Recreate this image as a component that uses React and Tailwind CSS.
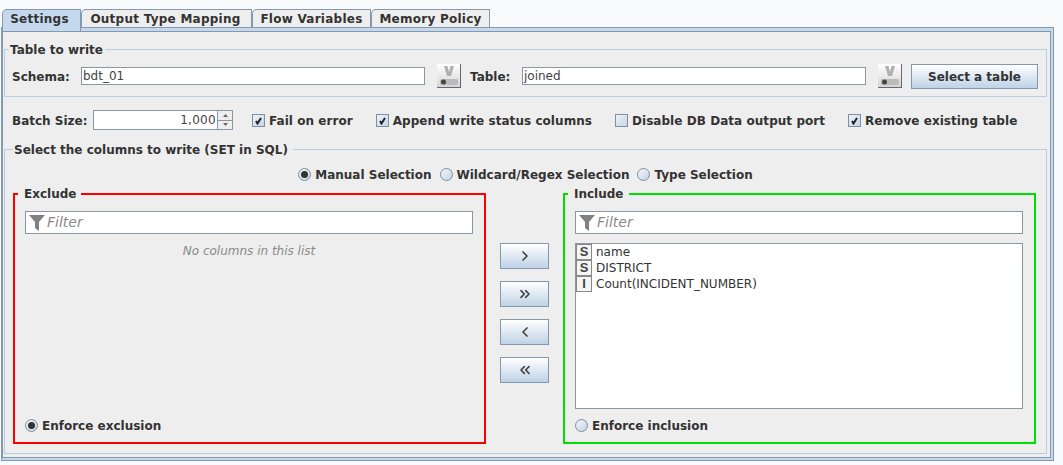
import { ChevronRight, ChevronLeft, ChevronsRight, ChevronsLeft } from 'lucide-react';

const FONT = "font-['DejaVu_Sans',sans-serif]";

const tabs = [
  { label: 'Settings', width: 'w-[79px]', active: true, shift: 'pr-[4px]' },
  { label: 'Output Type Mapping', width: 'w-[171px]', shift: 'pr-[2px]' },
  { label: 'Flow Variables', width: 'w-[119px]' },
  { label: 'Memory Policy', width: 'w-[119px]' },
];

const Tab = ({ label, width, active, shift }) => (
  <div
    className={`${width} ${shift || ''} border border-b-0 border-[#8499b0] rounded-tl-[5px] flex justify-center text-[12px] tracking-[0.25px] leading-none font-bold text-[#333] whitespace-nowrap ${
      active ? 'h-[22px] bg-[#c5d9ee] relative z-10 items-start pt-[3px]' : 'h-[18px] bg-[#eeeeee] items-center'
    }`}
  >
    {label}
  </div>
);

const VarButton = () => (
  <button className="w-[24px] h-[24px] shrink-0 border-r border-b border-[#667] bg-gradient-to-b from-white to-[#d5d5d5] flex items-center justify-center">
    <svg width="22" height="22" viewBox="0 0 22 22">
      <path d="M6 1h3.5l1.5 6 1.5-6H16l-3 10h-4z" fill="#b0b0b0" />
      <rect x="2" y="14" width="18" height="6" rx="1.5" fill="#bbb" />
      <circle cx="5.5" cy="17" r="2.5" fill="#444" />
    </svg>
  </button>
);

const Check = ({ checked, label }) => (
  <div className="flex items-center gap-[4px] whitespace-nowrap">
    <span className="w-[13px] h-[13px] border border-[#7f8fa3] bg-gradient-to-br from-[#eef3f9] to-[#c6d5e6] flex items-center justify-center">
      {checked && (
        <svg width="9" height="9" viewBox="0 0 9 9">
          <path d="M2 5l1.5 2.5L7 2" fill="none" stroke="#222" strokeWidth="2" />
        </svg>
      )}
    </span>
    <span className="text-[12px] tracking-[0.05px] mt-[2px] font-bold text-[#333]">{label}</span>
  </div>
);

const Radio = ({ checked, label }) => (
  <div className="flex items-center gap-[4px] whitespace-nowrap">
    <span className="w-[13px] h-[13px] rounded-full border border-[#7f8fa3] bg-gradient-to-br from-[#f2f5fa] to-[#c6d5e6] flex items-center justify-center">
      {checked && <span className="w-[7px] h-[7px] rounded-full bg-[#333]" />}
    </span>
    <span className="text-[12px] mt-[2px] font-bold text-[#333]">{label}</span>
  </div>
);

const FilterBox = () => (
  <div className="h-[23px] shrink-0 border border-[#8a96a3] bg-white flex items-center pl-[3px] gap-[2px]">
    <svg width="16" height="18" viewBox="0 0 16 18">
      <path d="M0 1h16L10 8v9l-4-3V8z" fill="#808080" />
    </svg>
    <span className="text-[14px] italic text-[#8a8a8a]">Filter</span>
  </div>
);

const ArrowButton = ({ icon: Icon }) => (
  <button className="w-[49px] h-[26px] border border-[#8499b0] bg-gradient-to-b from-white to-[#bfd2e6] flex items-center justify-center">
    <Icon size={16} strokeWidth={2.5} className="text-[#444]" />
  </button>
);

const TypeRow = ({ type, name }) => (
  <div className="h-[16px] flex items-center gap-[4px]">
    <span className="w-[16px] h-[16px] border border-[#888] bg-[#f4f4f4] flex items-center justify-center text-[13px] font-bold text-[#444] font-['Liberation_Sans',sans-serif]">
      {type}
    </span>
    <span className="text-[12px] text-[#333]">{name}</span>
  </div>
);

const App = () => {
  return (
    <div className={`w-[1063px] h-[465px] bg-[#f9fafc] pt-[9px] pl-[1px] ${FONT}`}>
      <div className="flex items-start pl-[1px] h-[18px]">
        {tabs.map((tab) => (
          <Tab key={tab.label} {...tab} />
        ))}
      </div>

      <div className="w-[1053px] h-[434px] border border-[#8499b0] bg-[#c5d9ee] pt-[3px] pr-[2px] pb-[2px]">
        <div className="h-full border border-[#8499b0] bg-[#eeeeee] pt-[17px] pl-[1px] pr-[3px] text-[#333]">
          <div className="relative h-[48px] border border-[#b8cce2] pt-[6px] flex items-center pl-[7px]">
            <span className="absolute -top-[8px] left-[4px] bg-[#eeeeee] pl-[1px] pr-[2px] text-[12px] leading-[16px] font-bold">Table to write</span>
            <span className="text-[12px] font-bold w-[69px] mt-[2px]">Schema:</span>
            <div className="w-[344px] h-[18px] border border-[#8a96a3] bg-white pl-[1px] text-[12px] leading-[17px] text-[#444]">bdt_01</div>
            <div className="ml-[12px]"><VarButton /></div>
            <span className="text-[12px] font-bold ml-[9px] w-[52px] mt-[2px]">Table:</span>
            <div className="w-[344px] h-[18px] border border-[#8a96a3] bg-white pl-[1px] text-[12px] leading-[17px] text-[#444]">joined</div>
            <div className="ml-[12px]"><VarButton /></div>
            <button className="ml-[9px] w-[127px] h-[25px] pt-[2px] border border-[#8499b0] bg-gradient-to-b from-white to-[#bfd2e6] text-[12px] font-bold">Select a table</button>
          </div>

          <div className="h-[52px] flex items-start pt-[13px] pl-[8px]">
            <span className="text-[12px] font-bold w-[81px] h-[20px] pt-[2px] whitespace-nowrap">Batch Size:</span>
            <div className="w-[140px] h-[20px] border border-[#8a96a3] bg-white flex">
              <span className="flex-1 text-right pr-[1px] text-[12px] tracking-[0.3px] leading-[19px] text-[#444]">1,000</span>
              <div className="w-[15px] border-l border-[#8a96a3] flex flex-col bg-[#eeeeee]">
                <span className="flex-1 border-b border-[#8a96a3] flex items-center justify-center">
                  <svg width="5" height="3" viewBox="0 0 5 3"><path d="M2.5 0L5 3H0z" fill="#666" /></svg>
                </span>
                <span className="flex-1 flex items-center justify-center">
                  <svg width="5" height="3" viewBox="0 0 5 3"><path d="M0 0h5L2.5 3z" fill="#666" /></svg>
                </span>
              </div>
            </div>
            <div className="ml-[19px] h-[20px] flex items-center"><Check checked label="Fail on error" /></div>
            <div className="ml-[23px] h-[20px] flex items-center"><Check checked label="Append write status columns" /></div>
            <div className="ml-[23px] h-[20px] flex items-center"><Check label="Disable DB Data output port" /></div>
            <div className="ml-[23px] h-[20px] flex items-center"><Check checked label="Remove existing table" /></div>
          </div>

          <div className="relative h-[305px] border border-[#b8cce2] pt-[15px] pl-[8px]">
            <span className="absolute -top-[8px] left-[8px] bg-[#eeeeee] pl-[1px] pr-[5px] text-[12px] leading-[16px] font-bold whitespace-nowrap">Select the columns to write (SET in SQL)</span>
            <div className="h-[18px] flex justify-center gap-[8px] pr-[8px]">
              <Radio checked label="Manual Selection" />
              <Radio label="Wildcard/Regex Selection" />
              <Radio label="Type Selection" />
            </div>
            <div className="mt-[10px] flex">
              <div className="relative w-[473px] h-[251px] border-2 border-[#ff0000] pl-[10px] pr-[11px] pt-[16px] pb-[7px] flex flex-col">
                <span className="absolute -top-[9px] left-[3px] bg-[#eeeeee] pl-[6px] pr-[5px] text-[12px] leading-[16px] font-bold">Exclude</span>
                <FilterBox />
                <div className="mt-[8px] text-center text-[12px] italic text-[#8a8a8a]">No columns in this list</div>
                <div className="mt-auto"><Radio checked label="Enforce exclusion" /></div>
              </div>
              <div className="w-[77px] flex flex-col items-center gap-[12px] pt-[50px]">
                <ArrowButton icon={ChevronRight} />
                <ArrowButton icon={ChevronsRight} />
                <ArrowButton icon={ChevronLeft} />
                <ArrowButton icon={ChevronsLeft} />
              </div>
              <div className="relative w-[473px] h-[251px] border-2 border-[#00dd00] pl-[10px] pr-[11px] pt-[16px] pb-[7px] flex flex-col">
                <span className="absolute -top-[9px] left-[3px] bg-[#eeeeee] pl-[6px] pr-[5px] text-[12px] leading-[16px] font-bold">Include</span>
                <FilterBox />
                <div className="mt-[9px] h-[166px] border border-[#8a96a3] bg-white">
                  <TypeRow type="S" name="name" />
                  <TypeRow type="S" name="DISTRICT" />
                  <TypeRow type="I" name="Count(INCIDENT_NUMBER)" />
                </div>
                <div className="mt-auto"><Radio label="Enforce inclusion" /></div>
              </div>
            </div>
          </div>
        </div>
      </div>
    </div>
  );
};

export default App;
